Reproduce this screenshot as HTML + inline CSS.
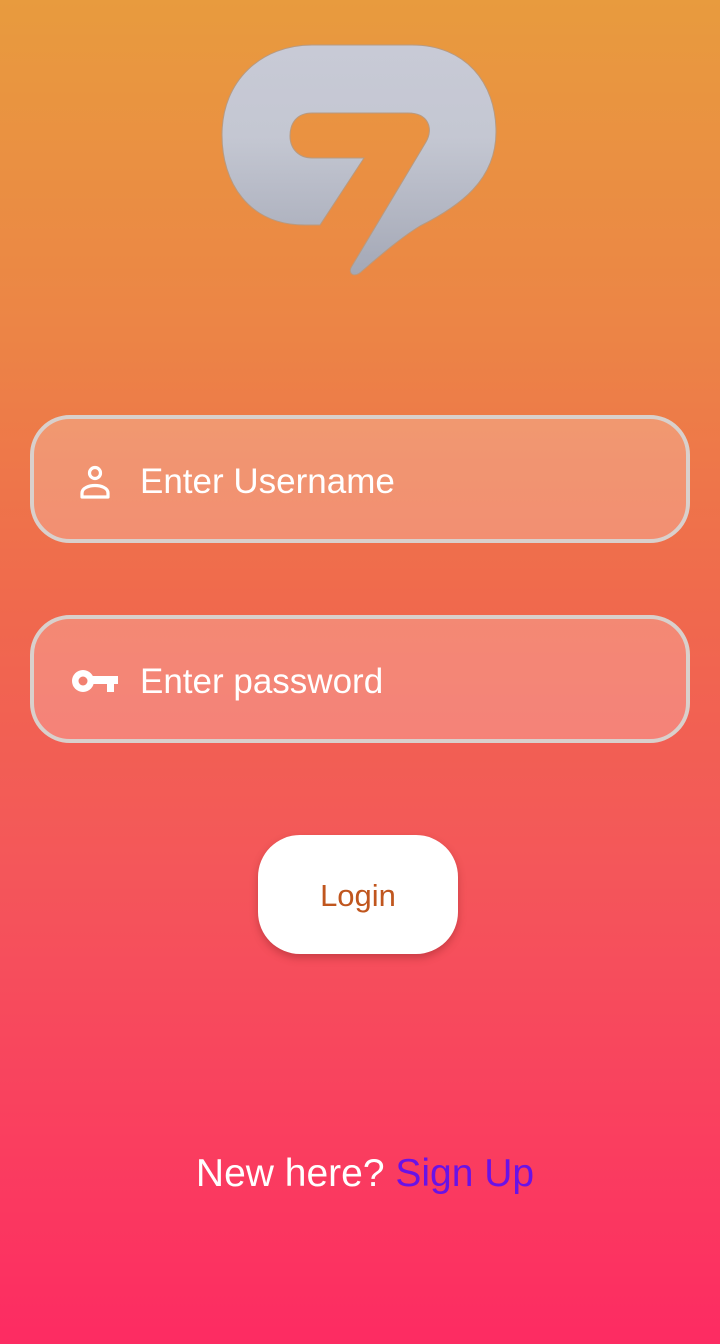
<!DOCTYPE html>
<html><head><meta charset="utf-8"><style>
html,body{margin:0;padding:0}
body{width:720px;height:1344px;position:relative;overflow:hidden;
background:linear-gradient(180deg,#e89b3e 0%,#ec8446 25%,#f0694d 45%,#f4565a 65%,#fa3e5f 85%,#fd2b62 100%);
font-family:"Liberation Sans",sans-serif;}
.inp{position:absolute;left:30px;width:652px;height:120px;border:4px solid #d9d0cc;border-radius:40px;
background:rgba(255,255,255,0.22);box-sizing:content-box}
.txt{position:absolute;left:106px;top:3px;line-height:120px;color:#fff;font-size:35px}
.btn{position:absolute;left:258px;top:835px;width:200px;height:119px;background:#fff;border-radius:42px;
box-shadow:0 4px 8px rgba(120,30,30,0.35);text-align:center;line-height:121px;color:#c0561e;font-size:31px}
.foot{position:absolute;left:0;width:730px;top:1152px;text-align:center;font-size:39px;color:#fff}
</style></head><body>
<svg style="position:absolute;left:0;top:0" width="720" height="300">
<defs><linearGradient id="g" x1="0" y1="0" x2="0" y2="1">
<stop offset="0" stop-color="#c8cad6"/><stop offset="0.4" stop-color="#c4c7d2"/><stop offset="1" stop-color="#a4a8b6"/></linearGradient></defs>
<path d="M320,225 H305 C248,225 222,182 222,135 C222,80 262,45 312,45 H412 C465,45 496,82 496,132 C496,180 460,206 420,226 C400,238 375,260 362,271 C354,279 347,273 352,266 L426,142 C434,128 428,113 408,113 H312 C297,113 290,123 290,136 C290,149 299,158 312,158 H364 Z" fill="url(#g)" stroke="#b89a80" stroke-width="1"/>
</svg>
<div class="inp" style="top:415px">
<svg style="position:absolute;left:43px;top:44px" width="36" height="36" viewBox="0 0 36 36">
<circle cx="18" cy="10" r="5.5" fill="none" stroke="#fff" stroke-width="3.2"/>
<path d="M5,34 V30 C5,25 12,22.5 18,22.5 C24,22.5 31,25 31,30 V34 Z" fill="none" stroke="#fff" stroke-width="3.2" stroke-linejoin="round"/>
</svg>
<div class="txt">Enter Username</div></div>
<div class="inp" style="top:615px">
<svg style="position:absolute;left:38px;top:48px" width="48" height="28" viewBox="0 0 48 28">
<circle cx="11" cy="14" r="11" fill="#fff"/><circle cx="11" cy="14" r="4.5" fill="#f28070"/>
<path d="M20,9 H46 V17 H42 V25 H35 V17 H20 Z" fill="#fff"/>
</svg>
<div class="txt">Enter password</div></div>
<div class="btn">Login</div>
<div class="foot">New here? <span style="color:#6a12e6">Sign Up</span></div>
</body></html>
